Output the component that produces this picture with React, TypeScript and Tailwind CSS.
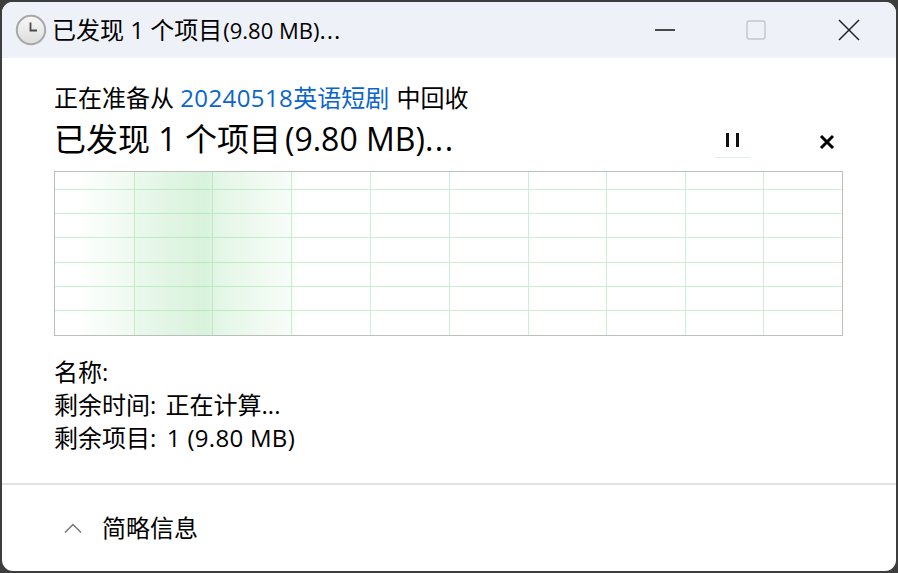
const V = [80, 78, 79, 79, 79, 79, 78, 79, 78, 78];
const H = [18, 24, 24, 25, 24, 24, 24];
const font = "font-['Open_Sans','Noto_Sans_CJK_SC','Liberation_Sans',sans-serif]";

function Clock() {
  return (
    <svg width="32" height="32" viewBox="0 0 32 32">
      <defs>
        <linearGradient id="c" x1="0" y1="0" x2="0" y2="1">
          <stop offset="0" stopColor="#f8f8f8" />
          <stop offset="1" stopColor="#dcdcdc" />
        </linearGradient>
      </defs>
      <circle cx="16" cy="16" r="14.2" fill="url(#c)" stroke="#a8a8a8" strokeWidth="2" />
      <path d="M15.5 8.5V16.5H22" fill="none" stroke="#4a4a4a" strokeWidth="1.8" />
    </svg>
  );
}

export default function App() {
  return (
    <div className={`h-[573px] w-[898px] bg-[#3d3d3d] p-[2px] ${font} text-black`}>
      <div className="flex h-[569px] w-[894px] flex-col overflow-hidden rounded-[11px] bg-white">
        <div className="flex h-[56px] shrink-0 items-center bg-[#eef2f8]">
          <div className="ml-[13px] mr-[5px] flex"><Clock /></div>
          <span className="text-[24px] leading-none">
            已发现 1 个项目<span className="ml-[1px] text-[22px]">(9.80 MB)</span><span className="text-[24px] tracking-[1px]">...</span>
          </span>
          <div className="ml-auto flex items-center">
            <svg className="mr-[71px]" width="20" height="20" viewBox="0 0 20 20"><path d="M0 10H20" stroke="#111" strokeWidth="1.5" /></svg>
            <svg className="mr-[72px]" width="20" height="20" viewBox="0 0 20 20"><rect x="1" y="1" width="18" height="18" rx="2" fill="none" stroke="#c4c8cc" strokeWidth="1.5" /></svg>
            <svg className="mr-[36px]" width="22" height="22" viewBox="0 0 22 22"><path d="M1 1L21 21M21 1L1 21" stroke="#222" strokeWidth="1.5" /></svg>
          </div>
        </div>
        <div className="flex flex-1 flex-col pl-[52px] pr-[53px]">
          <div className="mt-[26px] text-[24px] leading-[28px]">
            正在准备从 <span className="text-[#0a66cc]"><span className="tracking-[0.4px]">20240518</span>英语短剧</span><span className="ml-[1px]"> 中回收</span>
          </div>
          <div className="mt-[7px] flex h-[40px] items-center">
            <span className="text-[32px] leading-none">
              已发现 1 个项目<span className="ml-[4px]">(9.80 MB)</span><span className="tracking-[1.5px]">...</span>
            </span>
            <div className="ml-auto flex items-center">
              <div className="mr-[69px] mt-[3px] flex h-[34px] w-[35px] items-center justify-center border-b border-[#e4eef0]">
                <div className="flex gap-[7px]"><div className="h-[14px] w-[3px] bg-[#111]" /><div className="h-[14px] w-[3px] bg-[#111]" /></div>
              </div>
              <svg className="mr-[8px] mt-[5px]" width="16" height="16" viewBox="0 0 16 16"><path d="M2 2L14 14M14 2L2 14" stroke="#000" strokeWidth="3" /></svg>
            </div>
          </div>
          <div className="relative mt-[12px] h-[165px] w-[789px] border border-[#bdbdbd] bg-white">
            <div className="flex flex-col">
              {H.map((h, r) => (
                <div key={r} className={`flex box-border ${r < 6 ? "border-b border-[#c9f0d2]" : ""}`} style={{ height: h }}>
                  {V.map((w, c) => (
                    <div key={c} className="box-border border-r border-[#c9f0d2] last:border-r-0" style={{ width: w }} />
                  ))}
                </div>
              ))}
            </div>
            <div className="absolute inset-y-0 left-[20px] w-[225px] bg-[linear-gradient(90deg,rgba(150,220,160,0)_0%,rgba(150,220,160,0.16)_26%,rgba(150,220,160,0.2)_28%,rgba(150,220,160,0.37)_58%,rgba(150,220,160,0.3)_61%,rgba(150,220,160,0.27)_62%,rgba(150,220,160,0.07)_96%,rgba(150,220,160,0)_100%)]" />
          </div>
          <div className="mt-[19px] text-[24px] leading-[33px]">
            <div>名称:</div>
            <div>剩余时间:<span className="ml-[3px]"> 正在计算...</span></div>
            <div>剩余项目:<span className="ml-[4px] tracking-[0.3px]"> 1 (9.80 MB)</span></div>
          </div>
        </div>
        <div className="flex h-[88px] shrink-0 items-center border-t-2 border-[#e2e2e2]">
          <svg className="ml-[62px] mr-[20px]" width="18" height="10" viewBox="0 0 18 10"><path d="M1 9.5L9 1.5L17 9.5" fill="none" stroke="#777" strokeWidth="1.5" /></svg>
          <span className="text-[24px] leading-none">简略信息</span>
        </div>
      </div>
    </div>
  );
}
